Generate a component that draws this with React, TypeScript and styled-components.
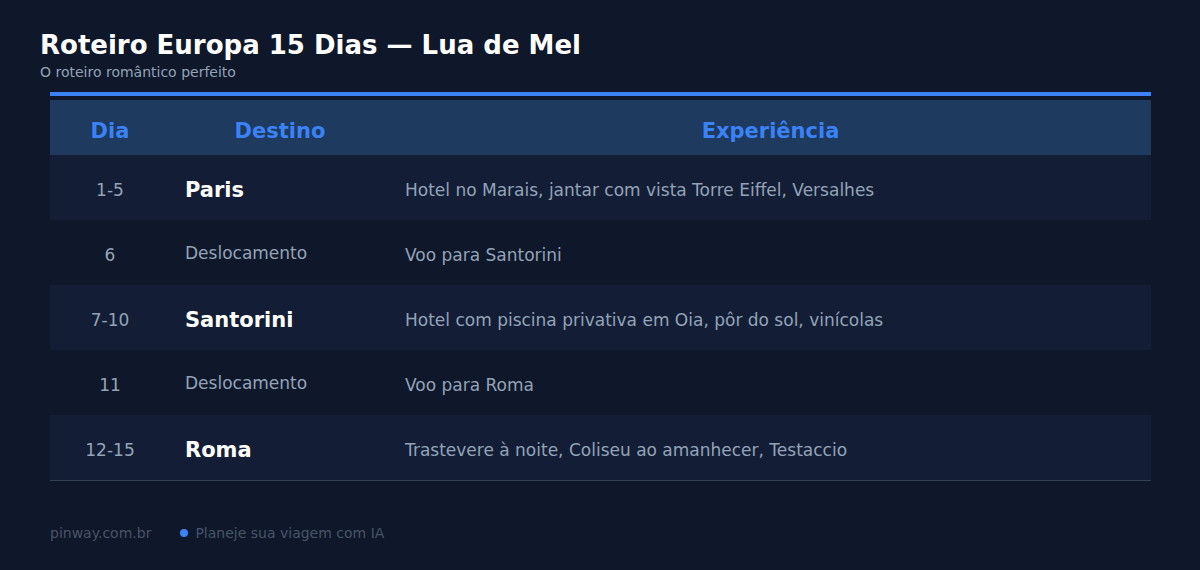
import React from "react";
import styled, { createGlobalStyle } from "styled-components";

const Global = createGlobalStyle`
  html, body { margin: 0; padding: 0; background: #0f172a; }
  body { font-family: "DejaVu Sans", "Liberation Sans", sans-serif; }
  * { box-sizing: border-box; }
`;

const Page = styled.div`
  width: 1200px;
  height: 570px;
  padding: 30px 40px 0 40px;
  background: #0f172a;
  display: flex;
  flex-direction: column;
`;

const Title = styled.h1`
  margin: 0;
  font-size: 26px;
  font-weight: 700;
  color: #ffffff;
  line-height: 31px;
`;

const Subtitle = styled.p`
  margin: 3px 0 0 0;
  font-size: 14px;
  color: #94a3b8;
  line-height: 16px;
`;

const Table = styled.div`
  margin: 12px 9px 0 10px;
  border-top: 4px solid #3b82f6;
  border-bottom: 1px solid #334155;
  padding-top: 4px;
  display: flex;
  flex-direction: column;
`;

const Grid = styled.div`
  display: grid;
  grid-template-columns: 120px 220px 1fr;
`;

const HeaderRow = styled(Grid)`
  background: #1e3a5f;
  height: 55px;
  padding-top: 6px;
`;

const HeaderCell = styled.div`
  display: flex;
  align-items: center;
  justify-content: center;
  font-size: 21px;
  font-weight: 700;
  color: #3b82f6;
`;

const Row = styled(Grid)<{ $odd: boolean }>`
  height: 65px;
  padding-top: 4px;
  background: ${(p) => (p.$odd ? "#131e36" : "transparent")};
`;

const DayCell = styled.div`
  display: flex;
  align-items: center;
  justify-content: center;
  font-size: 17px;
  color: #94a3b8;
`;

const DestCell = styled.div<{ $transit: boolean }>`
  display: flex;
  align-items: center;
  padding: 0 15px ${(p) => (p.$transit ? "4px" : "0")} 15px;
  font-size: ${(p) => (p.$transit ? "17px" : "21px")};
  font-weight: ${(p) => (p.$transit ? 400 : 700)};
  color: ${(p) => (p.$transit ? "#94a3b8" : "#ffffff")};
`;

const ExpCell = styled.div`
  display: flex;
  align-items: center;
  padding: 0 15px;
  font-size: 17px;
  color: #94a3b8;
`;

const Footer = styled.div`
  margin: 44px 0 0 10px;
  display: flex;
  align-items: center;
  font-size: 14px;
  line-height: 16px;
  color: #475569;
`;

const Brand = styled.span`
  margin-right: 29px;
`;

const Dot = styled.span`
  width: 8px;
  height: 8px;
  border-radius: 50%;
  background: #3b82f6;
  margin-right: 7px;
`;

const rows = [
  { day: "1-5", dest: "Paris", exp: "Hotel no Marais, jantar com vista Torre Eiffel, Versalhes", transit: false },
  { day: "6", dest: "Deslocamento", exp: "Voo para Santorini", transit: true },
  { day: "7-10", dest: "Santorini", exp: "Hotel com piscina privativa em Oia, pôr do sol, vinícolas", transit: false },
  { day: "11", dest: "Deslocamento", exp: "Voo para Roma", transit: true },
  { day: "12-15", dest: "Roma", exp: "Trastevere à noite, Coliseu ao amanhecer, Testaccio", transit: false },
];

export default function App() {
  return (
    <>
      <Global />
      <Page>
        <Title>Roteiro Europa 15 Dias — Lua de Mel</Title>
        <Subtitle>O roteiro romântico perfeito</Subtitle>
        <Table>
          <HeaderRow>
            <HeaderCell>Dia</HeaderCell>
            <HeaderCell>Destino</HeaderCell>
            <HeaderCell>Experiência</HeaderCell>
          </HeaderRow>
          {rows.map((r, i) => (
            <Row key={i} $odd={i % 2 === 0}>
              <DayCell>{r.day}</DayCell>
              <DestCell $transit={r.transit}>{r.dest}</DestCell>
              <ExpCell>{r.exp}</ExpCell>
            </Row>
          ))}
        </Table>
        <Footer>
          <Brand>pinway.com.br</Brand>
          <Dot />
          <span>Planeje sua viagem com IA</span>
        </Footer>
      </Page>
    </>
  );
}
